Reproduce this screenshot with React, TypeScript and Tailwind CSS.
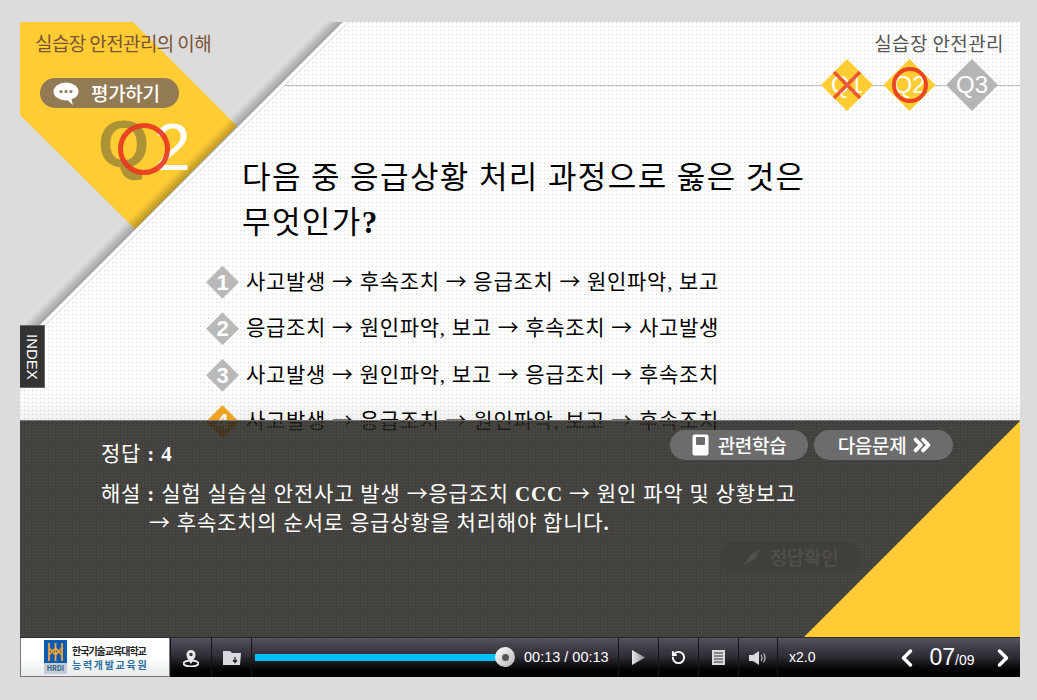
import { ChevronLeft, ChevronRight, ChevronsRight, RotateCcw } from "lucide-react";

const options = [
  "사고발생 → 후속조치 → 응급조치 → 원인파악, 보고",
  "응급조치 → 원인파악, 보고 → 후속조치 → 사고발생",
  "사고발생 → 원인파악, 보고 → 응급조치 → 후속조치",
  "사고발생 → 응급조치 → 원인파악, 보고 → 후속조치",
];

function Arrow() {
  return <span className="leading-none [font-family:'Noto_Sans_CJK_KR',sans-serif]">→</span>;
}

function Corner() {
  return (
    <svg className="absolute left-0 top-0" width="345" height="345" viewBox="0 0 345 345">
      <defs>
        <linearGradient id="edge" gradientUnits="userSpaceOnUse" x1="153" y1="153" x2="161.5" y2="161.5">
          <stop offset="0" stopColor="#000" stopOpacity="0" />
          <stop offset="1" stopColor="#000" stopOpacity="0.28" />
        </linearGradient>
      </defs>
      <polygon points="0,0 323,0 0,323" fill="#dcdcdc" />
      <polygon points="0,0 113,0 217,104 115,207 0,93" fill="#ffcc33" />
      <polygon points="306,0 323,0 0,323 0,306" fill="url(#edge)" />
      <polygon points="323,0 327,0 0,327 0,323" fill="#ffffff" />
      <polygon points="328,0 329,0 0,329 0,328" fill="#d8d8d8" />
    </svg>
  );
}

function BarButton({ children, width }: { children: React.ReactNode; width: string }) {
  return <div className={`flex items-center justify-center border-l border-[#15141a] ${width}`}>{children}</div>;
}

export default function App() {
  return (
    <div className="flex h-[700px] w-[1037px] flex-col overflow-hidden bg-[#dcdcdc] px-[20px] pt-[22px] [font-family:'Liberation_Serif','Noto_Sans_CJK_KR',serif]">
      {/* 화면 */}
      <div className="relative h-[615px] w-[1000px] overflow-hidden bg-white bg-[radial-gradient(circle_at_0.5px_0.5px,#d4d4d4_0.7px,transparent_0.7px)] bg-[length:4px_4px]">
        <Corner />
        <div className="absolute left-[265px] right-0 top-[63px] h-px bg-[#bdbdbd]" />

        <div className="relative">
          <div className="flex h-[130px] justify-between [font-family:'Noto_Sans_CJK_KR',sans-serif]">
            <div className="relative pl-[15px] pt-[9px]">
              <div className="text-[19px] leading-[24px] tracking-[-0.6px] text-[#7a5435]">실습장 안전관리의 이해</div>
              <div className="ml-[5px] mt-[23px] flex h-[30px] w-[139px] items-center gap-[12px] rounded-full bg-[#917a54] pl-[13px]">
                <svg width="26" height="26" viewBox="0 0 26 26">
                  <ellipse cx="13" cy="11.5" rx="12.5" ry="9" fill="#fff" />
                  <path d="M12 18 L20 25 L18 18 Z" fill="#fff" />
                  <circle cx="8" cy="11.5" r="1.6" fill="#917a54" />
                  <circle cx="13" cy="11.5" r="1.6" fill="#917a54" />
                  <circle cx="18" cy="11.5" r="1.6" fill="#917a54" />
                </svg>
                <span className="text-[19px] font-medium tracking-[-0.3px] text-white">평가하기</span>
              </div>
              <span className="absolute left-[78px] top-[82px] text-[66px] font-bold leading-[80px] text-[#ad9336] [font-family:'Liberation_Sans',sans-serif]">Q</span>
              <span className="absolute left-[134px] top-[85px] text-[66px] leading-[80px] text-white [font-family:'Liberation_Sans',sans-serif]">2</span>
              <div className="absolute left-[98px] top-[101px] h-[52px] w-[52px] rounded-full border-[5px] border-[#e8351f]/90" />
            </div>
            <div className="pr-[22px] pt-[9px]">
              <div className="-mr-[6px] text-right text-[19px] leading-[24px] tracking-[0.4px] text-[#555555]">실습장 안전관리</div>
              <div className="mt-[4px] flex gap-[10.5px]">
                <Diamond label="Q1" tone="bg-[#ffcc33]">
                  <svg className="absolute left-[10px] top-[10px]" width="32" height="32" viewBox="0 0 32 32">
                    <path d="M3 3 L29 29 M29 3 L3 29" stroke="#e8402a" strokeOpacity="0.85" strokeWidth="3.5" />
                  </svg>
                </Diamond>
                <Diamond label="Q2" tone="bg-[#ffcc33]">
                  <div className="absolute left-[8px] top-[8px] h-[36px] w-[36px] rounded-full border-[4px] border-[#e8351f]/90" />
                </Diamond>
                <Diamond label="Q3" tone="bg-[#b5b5b5]" />
              </div>
            </div>
          </div>

          <h2 className="ml-[222px] mt-[3px] text-[31px] font-normal leading-[45px] tracking-[1.4px] text-black">
            다음 중 응급상황 처리 과정으로 옳은 것은
            <br />
            무엇인가<b>?</b>
          </h2>

          <ul className="ml-[186px] mt-[14px] flex flex-col">
            {options.map((text, i) => (
              <li key={i} className="flex h-[46.5px] items-center gap-[7px]">
                <div
                  className={`flex h-[33px] w-[33px] items-center justify-center text-[22px] font-bold text-white [clip-path:polygon(50%_0,100%_50%,50%_100%,0_50%)] [font-family:'Liberation_Sans',sans-serif] ${
                    i === 3 ? "bg-[#f9a825]" : "bg-[#b9b9b9]"
                  }`}
                >
                  {i + 1}
                </div>
                <span className="text-[21px] tracking-[0.7px] text-black">
                  {text.split("→").map((part, j) => (
                    <span key={j}>
                      {j > 0 && <Arrow />}
                      {part}
                    </span>
                  ))}
                </span>
              </li>
            ))}
          </ul>
        </div>

        <div className="absolute bottom-[217px] left-0 right-0 h-[28px] bg-gradient-to-b from-transparent to-black/5" />

        {/* INDEX 탭 */}
        <div className="absolute left-0 top-[303px] flex h-[63px] w-[25px] items-center justify-center border border-l-0 border-[#666] bg-[#333333] text-[15px] text-white [font-family:'Liberation_Sans',sans-serif] [writing-mode:vertical-rl]">
          INDEX
        </div>

        {/* 정답 해설 */}
        <div className="absolute bottom-0 left-0 right-0 flex h-[217px] flex-col border-t border-[#77766f] bg-[#22211c]/85 bg-[radial-gradient(circle_at_0.5px_0.5px,#4f4e4a_0.7px,transparent_0.7px)] bg-[length:3px_3px] pl-[81px] pr-[67px] pt-[9px] text-white">
          <div className="absolute inset-0 bg-[#ffcc33] [clip-path:polygon(100%_0,100%_100%,784px_100%)]" />
          <div className="relative flex items-start justify-between">
            <div className="pt-[12px] text-[21px] leading-[24px] tracking-[0.8px]">
              정답 <b>: 4</b>
            </div>
            <div className="flex gap-[6px] [font-family:'Noto_Sans_CJK_KR',sans-serif]">
              <div className="flex h-[30px] w-[138px] items-center justify-center gap-[9px] rounded-full bg-[#6c6c6c] text-[19px] font-medium tracking-[-0.3px]">
                <svg width="17" height="22" viewBox="0 0 17 22">
                  <rect x="0.5" y="0.5" width="16" height="21" rx="2" fill="#fff" />
                  <rect x="4" y="3" width="9" height="8" rx="1" fill="#6c6c6c" />
                </svg>
                관련학습
              </div>
              <div className="flex h-[30px] w-[139px] items-center justify-center gap-[3px] rounded-full bg-[#6c6c6c] pl-[6px] text-[19px] font-medium tracking-[-0.3px]">
                다음문제
                <ChevronsRight size={26} strokeWidth={3.5} />
              </div>
            </div>
          </div>
          <div className="relative mt-[14px] text-[21px] leading-[29px] tracking-[0.8px]">
            <div className="h-[29px]">
              해설 <b>:</b> 실험 실습실 안전사고 발생 <Arrow />응급조치 <b>CCC</b> <Arrow /> 원인 파악 및 상황보고
            </div>
            <div className="h-[29px] pl-[48px]">
              <Arrow /> 후속조치의 순서로 응급상황을 처리해야 합니다<b>.</b>
            </div>
          </div>
          <div className="relative mr-[93px] mt-[4px] flex h-[30px] w-[140px] items-center justify-center gap-[8px] self-end rounded-full bg-[#403f3b] text-[19px] font-medium tracking-[-0.3px] text-[#50504b] [font-family:'Noto_Sans_CJK_KR',sans-serif]">
            <svg width="20" height="20" viewBox="0 0 20 20">
              <path d="M2 18 L8 8 L18 2 L13 12 Z" fill="#50504b" />
            </svg>
            정답확인
          </div>
        </div>
      </div>

      {/* 하단 컨트롤 바 */}
      <div className="flex h-[40px] w-[1000px] border-t border-[#2a2a2a] bg-gradient-to-b from-[#56525f] via-[#2c2a32] to-[#000000] text-white [font-family:'Liberation_Sans',sans-serif]">
        <div className="flex w-[150px] shrink-0 items-center gap-[5px] border border-t-0 border-[#777] bg-gradient-to-b from-white from-50% to-[#e6ebee] pl-[23px] [font-family:'Noto_Sans_CJK_KR',sans-serif]">
          <div className="flex h-[34px] w-[23px] flex-col">
            <div className="flex h-[23px] items-center justify-center bg-[#0a5db0]">
              <svg width="17" height="20" viewBox="0 0 17 20" fill="none" stroke="#f7a23b" strokeWidth="1.8">
                <path d="M2 1 V19 M8.5 1 V19 M15 1 V19 M2 6 L8.5 13 L15 6 M2 13 L8.5 6 L15 13" />
              </svg>
            </div>
            <div className="flex h-[11px] items-center justify-center bg-[#c6ccd2] text-[7px] font-bold leading-none text-[#2a5e8c]">HRDI</div>
          </div>
          <div className="flex flex-col gap-[1px] leading-[13px]">
            <span className="text-[10px] font-bold tracking-[-1px] text-[#222]">한국기술교육대학교</span>
            <span className="text-[10px] font-bold tracking-[1.7px] text-[#2a6f9e]">능력개발교육원</span>
          </div>
        </div>

        <BarButton width="w-[41px]">
          <svg width="16" height="18" viewBox="0 0 16 18">
            <ellipse cx="8" cy="14.5" rx="7.5" ry="3" fill="none" stroke="#e8e8e8" strokeWidth="2" />
            <path d="M8 15 C5 10 3.5 8.5 3.5 5.5 A4.5 4.5 0 0 1 12.5 5.5 C12.5 8.5 11 10 8 15 Z" fill="#e8e8e8" />
            <circle cx="8" cy="5.5" r="1.7" fill="#33313a" />
          </svg>
        </BarButton>
        <BarButton width="w-[40px]">
          <svg width="20" height="16" viewBox="0 0 20 16">
            <path d="M1 1 H8 L10 3 H19 L18 15 H1 Z" fill="#d9d9df" />
            <path d="M13 7 V12 M11 10 L13 12.5 L15 10" stroke="#222" strokeWidth="1.3" fill="none" />
          </svg>
        </BarButton>
        <div className="flex w-[367px] items-center border-l border-[#15141a] pl-[3px]">
          <div className="relative h-[7px] w-[250px] bg-[#00bfff]">
            <div className="absolute -right-[10px] -top-[7px] flex h-[20px] w-[20px] items-center justify-center rounded-full bg-gradient-to-br from-white to-[#b5b5b5]">
              <div className="h-[7px] w-[7px] rounded-full bg-[#555]" />
            </div>
          </div>
          <span className="ml-[19px] whitespace-nowrap text-[14.5px] leading-none">00:13 / 00:13</span>
        </div>
        <BarButton width="w-[40px]">
          <svg width="13" height="15" viewBox="0 0 13 15">
            <defs>
              <linearGradient id="play" x1="0" y1="0" x2="1" y2="0">
                <stop offset="0" stopColor="#e8e8ec" />
                <stop offset="1" stopColor="#8d8c96" />
              </linearGradient>
            </defs>
            <polygon points="0,0 13,7.5 0,15" fill="url(#play)" />
          </svg>
        </BarButton>
        <BarButton width="w-[40px]">
          <RotateCcw size={15} strokeWidth={3} />
        </BarButton>
        <BarButton width="w-[40px]">
          <svg width="13" height="15" viewBox="0 0 13 15">
            <rect width="13" height="15" fill="#d9d9df" />
            <path d="M2 3 H11 M2 6 H11 M2 9 H11 M2 12 H11" stroke="#333" strokeWidth="1.2" />
          </svg>
        </BarButton>
        <BarButton width="w-[39px]">
          <svg width="18" height="14" viewBox="0 0 18 14" fill="none">
            <path d="M0 4 H4 L10 0 V14 L4 10 H0 Z" fill="#d9d9df" />
            <path d="M12 4 Q14 7 12 10 M14.5 2.5 Q17.5 7 14.5 11.5" stroke="#b5b5bb" strokeWidth="1.3" />
          </svg>
        </BarButton>
        <div className="flex flex-1 items-center border-l border-[#15141a] pl-[11px]">
          <span className="text-[14px]">x2.0</span>
          <ChevronLeft className="ml-[78px]" size={28} strokeWidth={3} />
          <span className="ml-[8px] text-[23px] leading-none">07</span>
          <span className="mt-[5px] text-[14px] leading-none">/09</span>
          <ChevronRight className="ml-[14px]" size={28} strokeWidth={3} />
        </div>
      </div>
    </div>
  );
}

function Diamond({ label, tone, children }: { label: string; tone: string; children?: React.ReactNode }) {
  return (
    <div className="relative h-[52px] w-[52px]">
      <div className={`absolute inset-0 flex items-center justify-center text-[24px] text-white [clip-path:polygon(50%_0,100%_50%,50%_100%,0_50%)] [font-family:'Liberation_Sans',sans-serif] ${tone}`}>
        {label}
      </div>
      {children}
    </div>
  );
}
